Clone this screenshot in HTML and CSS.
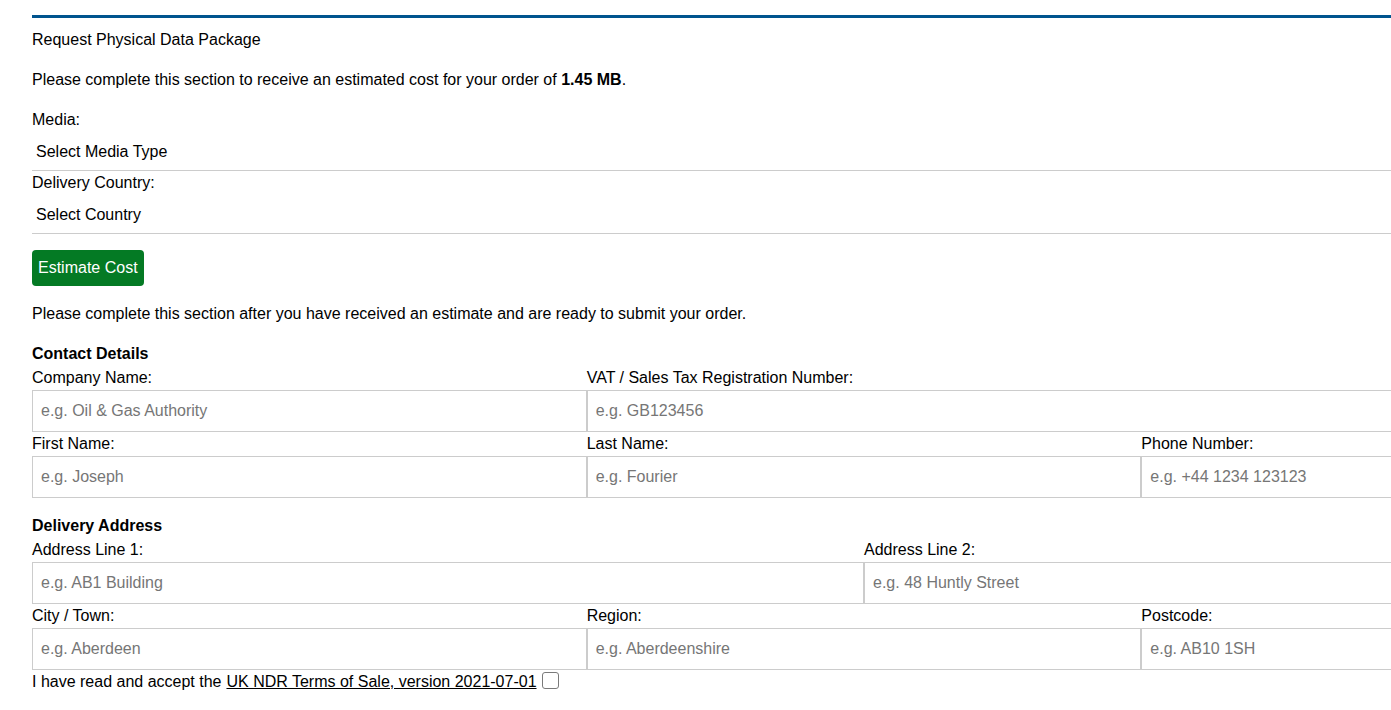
FILE: index.html
```html
<!DOCTYPE html>
<html lang="en">
<head>
  <meta charset="UTF-8">
  <meta name="viewport" content="width=device-width, initial-scale=1.0">
  <title>Request Physical Data Package</title>
  <link rel="stylesheet" href="styles.css">
</head>
<body>
  <!-- Order panel -->
  <div class="panel">
    <p>Request Physical Data Package</p>
    <p>Please complete this section to receive an estimated cost for your order of <strong>1.45 MB</strong>.</p>

    <!-- Estimate section -->
    <div class="estimate">
      <label for="media">Media:</label>
      <select id="media" class="select">
        <option>Select Media Type</option>
      </select>
      <label for="country">Delivery Country:</label>
      <select id="country" class="select">
        <option>Select Country</option>
      </select>
    </div>

    <button class="btn-estimate" type="button">Estimate Cost</button>

    <p>Please complete this section after you have received an estimate and are ready to submit your order.</p>

    <!-- Contact details -->
    <div class="section">
      <div class="section-title">Contact Details</div>
      <div class="row thirds">
        <div class="field">
          <label for="company">Company Name:</label>
          <input id="company" type="text" placeholder="e.g. Oil &amp; Gas Authority">
        </div>
        <div class="field span-2">
          <label for="vat">VAT / Sales Tax Registration Number:</label>
          <input id="vat" type="text" placeholder="e.g. GB123456">
        </div>
      </div>
      <div class="row thirds">
        <div class="field">
          <label for="first">First Name:</label>
          <input id="first" type="text" placeholder="e.g. Joseph">
        </div>
        <div class="field">
          <label for="last">Last Name:</label>
          <input id="last" type="text" placeholder="e.g. Fourier">
        </div>
        <div class="field">
          <label for="phone">Phone Number:</label>
          <input id="phone" type="text" placeholder="e.g. +44 1234 123123">
        </div>
      </div>
    </div>

    <!-- Delivery address -->
    <div class="section last">
      <div class="section-title">Delivery Address</div>
      <div class="row halves">
        <div class="field">
          <label for="addr1">Address Line 1:</label>
          <input id="addr1" type="text" placeholder="e.g. AB1 Building">
        </div>
        <div class="field">
          <label for="addr2">Address Line 2:</label>
          <input id="addr2" type="text" placeholder="e.g. 48 Huntly Street">
        </div>
      </div>
      <div class="row thirds">
        <div class="field">
          <label for="city">City / Town:</label>
          <input id="city" type="text" placeholder="e.g. Aberdeen">
        </div>
        <div class="field">
          <label for="region">Region:</label>
          <input id="region" type="text" placeholder="e.g. Aberdeenshire">
        </div>
        <div class="field">
          <label for="postcode">Postcode:</label>
          <input id="postcode" type="text" placeholder="e.g. AB10 1SH">
        </div>
      </div>
    </div>

    <div class="terms">
      I have read and accept the <a href="#">UK NDR Terms of Sale, version 2021-07-01</a>
      <input type="checkbox" class="check">
    </div>
  </div>
</body>
</html>
```

FILE: styles.css
```css
/* Page */
body {
  margin: 0;
  font-family: 'Liberation Sans', Arial, sans-serif;
  font-size: 16px;
  line-height: 24px;
  color: #000;
  background: #fff;
  overflow: hidden;
}

/* Panel with the blue top rule */
.panel {
  width: 1664px;
  margin: 15px 0 0 32px;
  padding-top: 10px;
  border-top: 3px solid #00548e;
}

p {
  margin: 0 0 16px;
}

label {
  display: block;
}

/* Estimate selects */
.estimate {
  margin-bottom: 16px;
}

.select {
  display: block;
  width: 100%;
  height: 39px;
  padding: 0 4px;
  border: none;
  border-bottom: 1px solid #cccccc;
  background: #fff;
  font-family: inherit;
  font-size: 16px;
  color: #000;
  appearance: none;
  -webkit-appearance: none;
}

/* Green button */
.btn-estimate {
  display: block;
  height: 36px;
  padding: 0 6px;
  margin-bottom: 16px;
  border: none;
  border-radius: 4px;
  background: #047a24;
  color: #fff;
  font-family: inherit;
  font-size: 16px;
  cursor: pointer;
}

/* Form sections */
.section {
  margin-bottom: 16px;
}

.section.last {
  margin-bottom: 0;
}

.section-title {
  font-weight: bold;
}

.row {
  display: grid;
}

.row.thirds {
  grid-template-columns: repeat(3, 1fr);
}

.row.halves {
  grid-template-columns: repeat(2, 1fr);
}

.field.span-2 {
  grid-column: span 2;
}

.field input {
  display: block;
  width: 100%;
  height: 42px;
  box-sizing: border-box;
  margin: 0;
  padding: 0 8px;
  border: 1px solid #cccccc;
  border-radius: 0;
  font-family: inherit;
  font-size: 16px;
  color: #000;
}

.field input::placeholder {
  color: #767676;
}

/* Terms line */
.terms {
  display: flex;
  align-items: center;
  gap: 5px;
}

.terms a {
  color: #000;
  text-decoration: underline;
}

.check {
  width: 17px;
  height: 17px;
  margin: 0 0 4px;
  border: 1px solid #7a7a7a;
  border-radius: 3px;
  background: #fff;
  appearance: none;
  -webkit-appearance: none;
}
```
